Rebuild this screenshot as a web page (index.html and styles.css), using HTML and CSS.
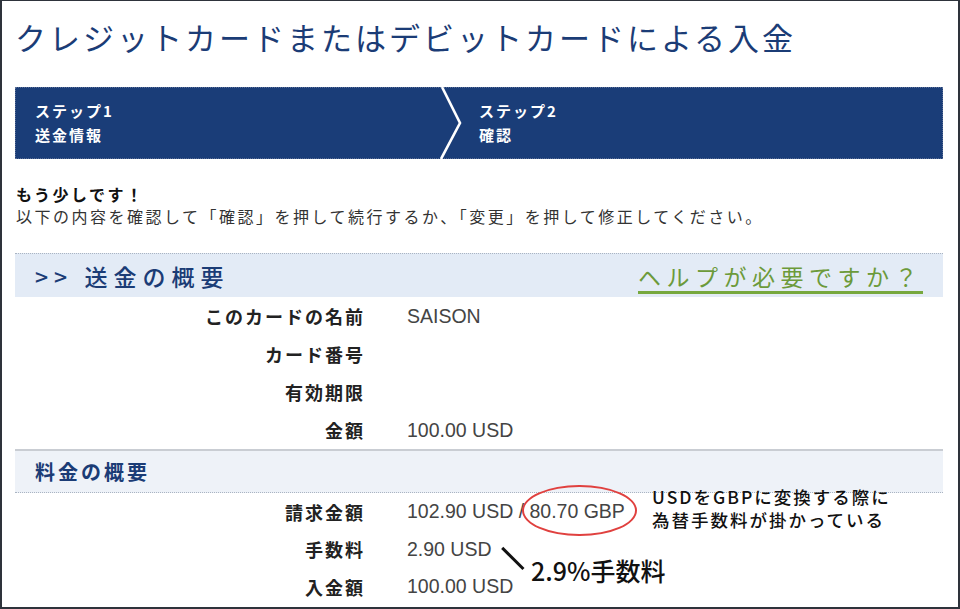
FILE: index.html
```html
<!DOCTYPE html>
<html lang="ja">
<head>
<meta charset="utf-8">
<title>クレジットカードまたはデビットカードによる入金</title>
<link rel="stylesheet" href="styles.css">
</head>
<body>
<div class="frame">
  <h1 class="title">クレジットカードまたはデビットカードによる入金</h1>

  <div class="steps">
    <div class="step step-first">
      <div>ステップ1</div>
      <div>送金情報</div>
    </div>
    <svg class="chev" width="22" height="72" viewBox="0 0 22 72"><polyline points="2,0 20,36 1,72" fill="none" stroke="#ffffff" stroke-width="2.6"/></svg>
    <div class="step step-second">
      <div>ステップ2</div>
      <div>確認</div>
    </div>
  </div>

  <p class="lead-strong">もう少しです！</p>
  <p class="lead">以下の内容を確認して「確認」を押して続行するか、「変更」を押して修正してください。</p>

  <div class="sec-head">
    <span class="sec-title">&gt;&gt; 送金の概要</span>
    <a class="help">ヘルプが必要ですか？</a>
  </div>

  <div class="rows">
    <div class="lbl">このカードの名前</div><div class="val">SAISON</div>
    <div class="lbl">カード番号</div><div class="val"></div>
    <div class="lbl">有効期限</div><div class="val"></div>
    <div class="lbl">金額</div><div class="val">100.00 USD</div>
  </div>

  <div class="sec-head2">料金の概要</div>

  <div class="rows rows2">
    <div class="lbl">請求金額</div><div class="val">102.90 USD / <span class="circled">80.70 GBP</span></div>
    <div class="lbl">手数料</div><div class="val">2.90 USD</div>
    <div class="lbl">入金額</div><div class="val">100.00 USD</div>
  </div>

  <div class="note-fx">
    <div>USDをGBPに変換する際に</div>
    <div>為替手数料が掛かっている</div>
  </div>
  <div class="note-line"></div>
  <div class="note-fee">2.9%手数料</div>
</div>
</body>
</html>
```

FILE: styles.css
```css
html, body {
  margin: 0;
  padding: 0;
  background: #ffffff;
}

.frame {
  position: relative;
  width: 960px;
  height: 609px;
  box-sizing: border-box;
  border: 2px solid #2e333b;
  border-top-width: 1px;
  padding: 16px 15px 0 13px;
  font-family: "Noto Sans CJK JP", "Noto Sans", sans-serif;
  overflow: hidden;
}

.title {
  margin: 0;
  font-size: 31px;
  line-height: 40px;
  font-weight: 400;
  color: #1b3c76;
  letter-spacing: 3px;
}

.steps {
  margin-top: 30px;
  height: 72px;
  background: #1a3d78;
  display: flex;
  align-items: stretch;
  color: #ffffff;
  border: 1px dotted #5a6e96;
  box-sizing: border-box;
}

.step {
  display: flex;
  flex-direction: column;
  justify-content: center;
  font-size: 15px;
  font-weight: 700;
  line-height: 24px;
  letter-spacing: 2px;
}

.step-first {
  width: 424px;
  padding-left: 19px;
  box-sizing: border-box;
}

.chev {
  display: block;
  flex: none;
  margin-top: -1px;
}

.step-second {
  padding-left: 17px;
}

.lead-strong {
  margin: 24px 0 0 1px;
  font-size: 16px;
  font-weight: 700;
  line-height: 22px;
  color: #111111;
  letter-spacing: 2.5px;
}

.lead {
  margin: 0 0 0 1px;
  font-size: 16px;
  line-height: 22px;
  color: #333333;
  letter-spacing: 2.5px;
}

.sec-head {
  margin-top: 26px;
  height: 44px;
  background: #e3ebf6;
  border-top: 1px dotted #aab4c2;
  box-sizing: border-box;
  display: flex;
  align-items: center;
  justify-content: space-between;
  padding: 0 20px 0 20px;
}

.sec-title {
  font-size: 23px;
  font-weight: 500;
  color: #1b3c76;
  letter-spacing: 6px;
}

.help {
  font-size: 23px;
  font-weight: 400;
  color: #6c9a3a;
  letter-spacing: 5.5px;
  text-decoration: underline;
  text-decoration-color: #77a83e;
  text-decoration-thickness: 3px;
  text-underline-offset: 5px;
}

.rows {
  display: grid;
  grid-template-columns: 348px 1fr;
  column-gap: 44px;
  grid-auto-rows: 38px;
  align-items: center;
}

.lbl {
  text-align: right;
  font-size: 18px;
  font-weight: 700;
  color: #222222;
  letter-spacing: 2px;
  margin-right: -2px;
}

.val {
  font-family: "Liberation Sans", Arial, "Noto Sans CJK JP", sans-serif;
  font-size: 19.5px;
  color: #444444;
}

.sec-head2 {
  height: 44px;
  box-sizing: border-box;
  background: #eef2f8;
  border-top: 2px solid #c9cdd3;
  border-bottom: 1px dotted #aab4c2;
  padding-left: 20px;
  display: flex;
  align-items: center;
  font-size: 20px;
  font-weight: 700;
  color: #1b3c76;
  letter-spacing: 3px;
}

.rows2 {
  grid-auto-rows: 37.5px;
}

.circled {
  position: relative;
}

.circled::after {
  content: "";
  position: absolute;
  left: -7px;
  right: -12px;
  top: -15px;
  bottom: -14px;
  border: 2px solid #e0413f;
  border-radius: 50%;
}

.note-fx {
  position: absolute;
  left: 650px;
  top: 484px;
  font-size: 17.5px;
  font-weight: 500;
  line-height: 23px;
  color: #111111;
  letter-spacing: 2px;
}

.note-line {
  position: absolute;
  left: 496px;
  top: 556px;
  width: 30px;
  height: 2.5px;
  background: #111111;
  transform: rotate(45deg);
}

.note-fee {
  position: absolute;
  left: 529px;
  top: 553px;
  font-size: 25px;
  font-weight: 500;
  line-height: 32px;
  color: #111111;
}
```
